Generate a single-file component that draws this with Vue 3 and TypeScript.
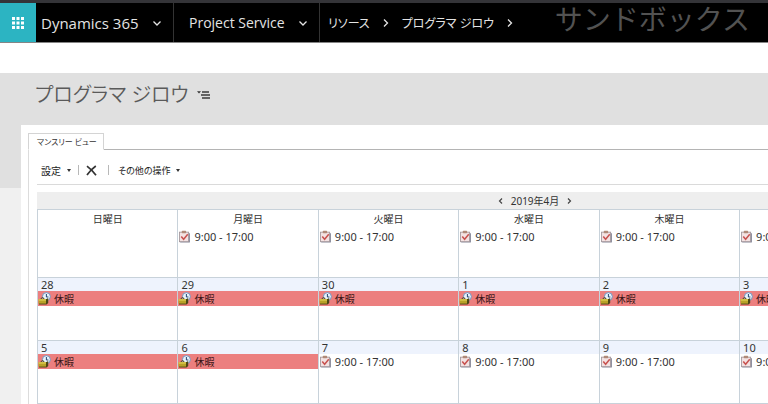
<script setup lang="ts">
type Kind = 'work' | 'off' | 'none'
interface Day {
  date: string
  kind: Kind
}

const weekdays: string[] = ['日曜日', '月曜日', '火曜日', '水曜日', '木曜日', '金曜日', '土曜日']

const day = (date: string, kind: Kind): Day => ({ date, kind })

const firstWeek: Day[] = [
  day('', 'none'), day('', 'work'), day('', 'work'), day('', 'work'),
  day('', 'work'), day('', 'work'), day('', 'none'),
]

const weeks: Day[][] = [
  ['28', '29', '30', '1', '2', '3', '4'].map((d) => day(d, 'off')),
  ['5', '6', '7', '8', '9', '10', '11'].map((d, i) => day(d, i < 2 ? 'off' : 'work')),
]
</script>

<template>
  <div class="page">
    <svg class="defs" width="0" height="0" aria-hidden="true">
      <symbol id="icon-work" viewBox="0 0 12 12">
        <path d="M2 3h9v8.5H2z" fill="#85889a" />
        <rect x="1.4" y="2" width="8.4" height="8.8" fill="#f3e2e2" stroke="#a3979c" stroke-width=".8" />
        <rect x="3.5" y=".8" width="4" height="2.2" rx=".6" fill="#b08a78" />
        <path d="M3 6l2.2 2.6L9 4" fill="none" stroke="#c8524f" stroke-width="1.4" />
      </symbol>
      <symbol id="icon-off" viewBox="0 0 13 13">
        <circle cx="8.400" cy="4.6" r="4" fill="#e6f1fc" stroke="#7290ba" stroke-width="1" />
        <path d="M8.400 2v3h2" fill="none" stroke="#27466f" stroke-width="1" />
        <path d="M3 7c0-1.8 3-1.8 3 0" fill="none" stroke="#4b4520" stroke-width="1" />
        <path d="M1 7h7.5l1.7-1v5l-1.7 1.4H1z" fill="#4d4715" />
        <path d="M.6 7.2h7.4v4.4H.6z" fill="#b9a228" />
        <path d="M.6 7.2h7.4v1.5H.6z" fill="#dcca50" />
      </symbol>
      <symbol id="chevron" viewBox="0 0 10 10">
        <path d="M1.5 3.5L5 7l3.5-3.5" fill="none" stroke="currentColor" stroke-width="1.3" />
      </symbol>
      <symbol id="chevron-right" viewBox="0 0 10 10">
        <path d="M3 1.5L6.5 5 3 8.5" fill="none" stroke="currentColor" stroke-width="1.3" />
      </symbol>
    </svg>

    <header class="topbar">
      <button class="waffle" type="button" aria-label="アプリ">
        <svg width="14" height="14" viewBox="0 0 14 14" fill="#fff">
          <path d="M1 1h3v3H1zM5.5 1h3v3h-3zM10 1h3v3h-3zM1 5.5h3v3H1zM5.5 5.5h3v3h-3zM10 5.5h3v3h-3zM1 10h3v3H1zM5.5 10h3v3h-3zM10 10h3v3h-3z" />
        </svg>
      </button>
      <button class="app" type="button">Dynamics 365<svg class="chev"><use href="#chevron" /></svg></button>
      <button class="area" type="button">Project Service<svg class="chev"><use href="#chevron" /></svg></button>
      <nav class="crumbs">
        <a href="#resources">リソース</a>
        <svg class="chev"><use href="#chevron-right" /></svg>
        <a href="#record">プログラマ ジロウ</a>
        <svg class="chev"><use href="#chevron-right" /></svg>
      </nav>
      <span class="sandbox">サンドボックス</span>
    </header>

    <main class="content">
      <div class="title">
        <h1>プログラマ ジロウ</h1>
        <button class="menu" type="button" aria-label="メニュー">
          <svg width="14" height="10" viewBox="0 0 14 10">
            <path d="M0 1.2h4L2 3.5z" fill="#333" />
            <path d="M5 2h7M4 5h9M5 8h8" stroke="#3c3c3c" stroke-width="1.5" />
          </svg>
        </button>
      </div>

      <section class="panel">
        <div class="tabs">
          <button class="tab" type="button">マンスリー ビュー</button>
        </div>
        <div class="body">
          <div class="toolbar">
            <button type="button">設定<i class="caret"></i></button>
            <span class="sep"></span>
            <button class="delete" type="button" aria-label="削除">
              <svg width="11" height="11" viewBox="0 0 11 11">
                <path d="M1 1.2C4 3.5 7.5 7 10 10.2M9.8 1C7 3 3.5 6.5 1 10" fill="none" stroke="#333" stroke-width="1.7" />
              </svg>
            </button>
            <span class="sep"></span>
            <button class="more" type="button">その他の操作<i class="caret"></i></button>
          </div>

          <div class="calendar">
            <div class="month">
              <button type="button" aria-label="前の月"><svg width="5" height="6" viewBox="0 0 5 6"><path d="M4 .5L1.5 3 4 5.5" /></svg></button>
              <span>2019年4月</span>
              <button type="button" aria-label="次の月"><svg width="5" height="6" viewBox="0 0 5 6"><path d="M1 .5L3.5 3 1 5.5" /></svg></button>
            </div>
            <table>
              <thead>
                <tr>
                  <th v-for="name in weekdays" :key="name" scope="col">{{ name }}</th>
                </tr>
              </thead>
              <tbody>
                <tr class="first">
                  <td v-for="(d, i) in firstWeek" :key="i">
                    <div v-if="d.kind === 'work'" class="event"><svg class="icon"><use href="#icon-work" /></svg>9:00 - 17:00</div>
                  </td>
                </tr>
                <tr v-for="(week, w) in weeks" :key="w" class="week">
                  <td v-for="d in week" :key="d.date">
                    <div class="date">{{ d.date }}</div>
                    <div v-if="d.kind === 'off'" class="event off"><svg class="icon"><use href="#icon-off" /></svg>休暇</div>
                    <div v-else class="event"><svg class="icon"><use href="#icon-work" /></svg>9:00 - 17:00</div>
                  </td>
                </tr>
              </tbody>
            </table>
          </div>
        </div>
      </section>
    </main>
  </div>
</template>

<style>
body {
  margin: 0;
  background: #f0f0f0;
  overflow: hidden;
}
</style>

<style scoped>
.page {
  font-family: "Noto Sans", "Noto Sans CJK JP", sans-serif;
  font-size: 10px;
  color: #333;
  font-feature-settings: "palt";
}
.defs {
  display: block;
}
button {
  display: flex;
  align-items: center;
  padding: 0;
  border: 0;
  background: none;
  color: inherit;
  font: inherit;
  font-feature-settings: inherit;
  white-space: nowrap;
}
svg {
  flex: none;
}
.topbar {
  display: flex;
  height: 39px;
  border-top: 3px solid #343438;
  border-bottom: 1px solid #858585;
  background: #000;
  color: #e4e4e4;
}
.waffle {
  width: 36px;
  justify-content: center;
  background: #2cb4c2;
}
.app,
.area {
  font-family: "Open Sans", sans-serif;
  justify-content: space-between;
  box-sizing: border-box;
  border-right: 1px solid #333;
}
.app {
  width: 138px;
  padding: 0 11px 0 5px;
  font-size: 15px;
}
.area {
  width: 146px;
  padding: 0 11px 0 15px;
  font-size: 14px;
}
.chev {
  width: 10px;
  height: 10px;
}
.crumbs {
  display: flex;
  align-items: center;
  gap: 11px;
  padding-left: 8px;
  font-size: 12px;
  white-space: nowrap;
}
.crumbs a {
  color: inherit;
  text-decoration: none;
}
.sandbox {
  margin-left: auto;
  padding-right: 18px;
  font-size: 28px;
  font-feature-settings: normal;
  line-height: 32px;
  color: #525252;
  white-space: nowrap;
}
.content {
  border-top: 30px solid #fff;
  padding-left: 21px;
  background: linear-gradient(#e0e0e0 115px, #f0f0f0 115px);
}
.title {
  display: flex;
  align-items: center;
  gap: 8px;
  height: 40px;
  padding: 0 0 12px 14px;
}
h1 {
  margin: 0;
  font-size: 20px;
  font-weight: 350;
  color: #5a5a5a;
}
.menu {
  padding-top: 3px;
}
.panel {
  padding: 8px 0 0 7px;
  background: #fff;
}
.tabs {
  display: flex;
  border-bottom: 1px solid #b4b4b4;
}
.tab {
  height: 17px;
  margin-bottom: -1px;
  padding: 0 6px 0 8px;
  border: 1px solid #d4d4d4;
  border-bottom-color: #fff;
  background: #fff;
  font-size: 8px;
}
.body {
  padding-left: 8px;
  border-left: 1px solid #dcdcdc;
  overflow: hidden;
}
.toolbar {
  display: flex;
  align-items: center;
  gap: 7px;
  box-sizing: border-box;
  height: 35px;
  margin-bottom: 7px;
  padding: 6px 0 0 4px;
  border-bottom: 1px solid #dadada;
  color: #222;
}
.delete {
  margin-right: 4px;
}
.more {
  margin-left: 2px;
  font-size: 9px;
}
.caret {
  margin-left: 6px;
  border: 2px solid transparent;
  border-top: 3px solid #333;
  border-bottom: 0;
}
.sep {
  width: 1px;
  height: 10px;
  background: #b8b8b8;
}
.calendar {
  min-width: 996px;
}
.month {
  display: flex;
  align-items: center;
  justify-content: center;
  gap: 8px;
  height: 17px;
  background: #eee;
}
.month path {
  fill: none;
  stroke: #444;
  stroke-width: 1.2;
}
table {
  width: calc(100% - 12px);
  table-layout: fixed;
  border-collapse: separate;
  border-spacing: 0;
  border-left: 1px solid #c8d2da;
  background: #fff;
}
th,
td {
  padding: 0;
  border-right: 1px solid #c8d2da;
  vertical-align: top;
}
th {
  height: 19px;
  border-top: 1px solid #c8d2da;
  font-size: 10px;
  font-weight: 400;
  line-height: 19px;
}
.first td {
  height: 48px;
}
.week td {
  height: 62px;
  border-top: 1px solid #c8d2da;
}
.week:last-child td {
  border-bottom: 1px solid #c8d2da;
}
.date {
  padding-left: 3px;
  background: #eef3fd;
  font-size: 11px;
  line-height: 13px;
}
.event {
  display: flex;
  align-items: center;
  gap: 3px;
  height: 15px;
  font-size: 11px;
}
.off {
  background: #ec7f7f;
  color: #3a1616;
  font-size: 10px;
}
.icon {
  width: 13px;
  height: 13px;
}
</style>
